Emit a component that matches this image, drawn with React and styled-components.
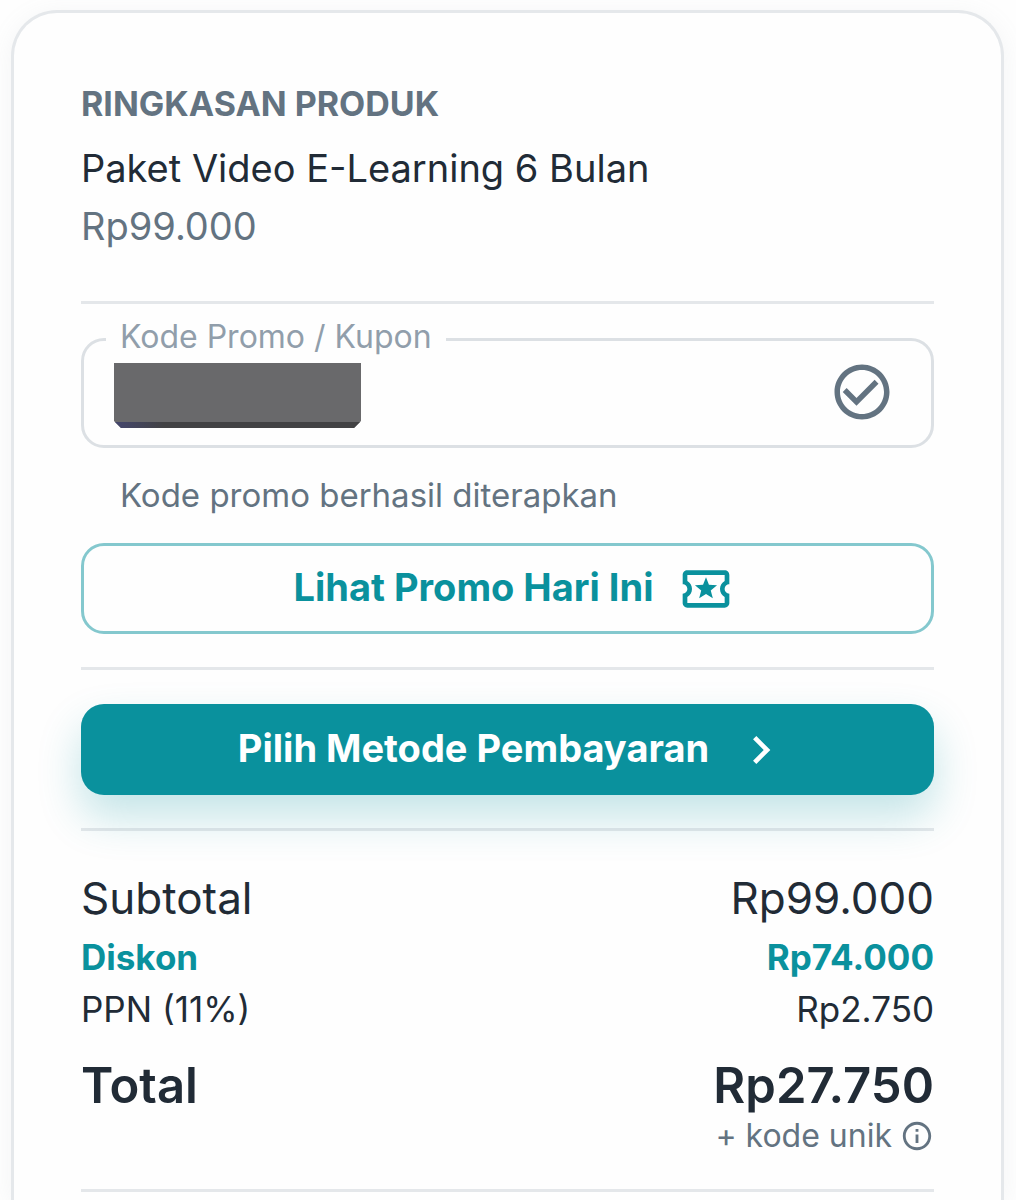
import React, { useState } from 'react';
import styled, { createGlobalStyle } from 'styled-components';
import {
    MdCheckCircleOutline,
    MdChevronRight,
    MdInfoOutline,
    MdOutlineLocalActivity,
} from 'react-icons/md';


function App() {

    const [code, setCode] = useState('');

    return (
        <>
            <GlobalStyle />
            <Page>
                <Card>
                    <Overline>Ringkasan Produk</Overline>
                    <ProductName>Paket Video E-Learning 6 Bulan</ProductName>
                    <ProductPrice>Rp99.000</ProductPrice>

                    <Divider />

                    <PromoField>
                        <PromoLegend>
                            <label htmlFor="promo">Kode Promo / Kupon</label>
                        </PromoLegend>
                        <PromoRow>
                            <PromoInput
                                id="promo"
                                type="text"
                                autoComplete="off"
                                aria-describedby="promo-status"
                                value={code}
                                onChange={(e) => setCode(e.target.value)}
                            />
                            <HiddenCode />
                            <MdCheckCircleOutline size={66} />
                        </PromoRow>
                    </PromoField>
                    <HelperText id="promo-status">Kode promo berhasil diterapkan</HelperText>

                    <OutlinedButton type="button">
                        <span>Lihat Promo Hari Ini</span>
                        <MdOutlineLocalActivity size={56} />
                    </OutlinedButton>

                    <Divider />

                    <PayButton type="button">
                        <span>Pilih Metode Pembayaran</span>
                        <MdChevronRight size={56} />
                    </PayButton>

                    <Divider />

                    <Summary>
                        <SubtotalRow>
                            <dt>Subtotal</dt>
                            <dd>Rp99.000</dd>
                        </SubtotalRow>
                        <DiscountRow>
                            <dt>Diskon</dt>
                            <dd>Rp74.000</dd>
                        </DiscountRow>
                        <TaxRow>
                            <dt>PPN (11%)</dt>
                            <dd>Rp2.750</dd>
                        </TaxRow>
                        <TotalRow>
                            <dt>Total</dt>
                            <dd>Rp27.750</dd>
                        </TotalRow>
                    </Summary>
                    <UniqueCode>
                        <span>+ kode unik</span>
                        <MdInfoOutline size={34} />
                    </UniqueCode>

                    <Divider />
                </Card>
            </Page>
        </>
    )
}

export default App


const GlobalStyle = createGlobalStyle`
    * {
        box-sizing: border-box;
    }

    body {
        margin: 0;
        background: #fefefe;
        color: #212b36;
        font-family: Inter, "Liberation Sans", sans-serif;
    }

    h1, h2, p, dl, dd {
        margin: 0;
    }
`

const Page = styled.main`
    display: flex;
    flex-direction: column;
    height: 100vh;
    padding: 10px 12px 0 11px;
    overflow: hidden;
`

const Card = styled.section`
    flex: 1;
    display: flex;
    flex-direction: column;
    padding: 68px 67px 0;
    border: 3px solid #e5e8eb;
    border-bottom: none;
    border-radius: 46px 46px 0 0;
    background: #fefefe;
    box-shadow: 0 4px 24px rgba(145, 158, 171, 0.1);
`

const Overline = styled.h2`
    color: #637381;
    font-size: 34px;
    font-weight: 700;
    line-height: 46px;
    text-transform: uppercase;
`

const ProductName = styled.h1`
    margin-top: 12px;
    font-size: 38px;
    font-weight: 400;
    line-height: 58px;
`

const ProductPrice = styled.p`
    margin-bottom: 46px;
    color: #637381;
    font-size: 38px;
    line-height: 58px;
`

const Divider = styled.hr`
    flex-shrink: 0;
    width: 100%;
    height: 3px;
    margin: 0;
    border: none;
    background: rgba(145, 158, 171, 0.24);
`

const PromoField = styled.fieldset`
    min-width: 0;
    margin: 17px 0 0;
    padding: 0 36px 18px 30px;
    border: 3px solid #dce0e4;
    border-radius: 23px;
`

const PromoLegend = styled.legend`
    margin-left: -8px;
    padding: 0 14px 4px;
    color: #919eab;
    font-size: 32px;
    line-height: 32px;
`

const PromoRow = styled.div`
    position: relative;
    display: flex;
    align-items: center;
    height: 70px;
    color: #637381;
`

const PromoInput = styled.input`
    flex: 1;
    min-width: 0;
    height: 64px;
    padding: 0;
    border: none;
    outline: none;
    background: transparent;
    color: #212b36;
    font: inherit;
    font-size: 38px;
`

/* covers the applied code */
const HiddenCode = styled.span`
    position: absolute;
    top: 6px;
    left: 0;
    width: 247px;
    height: 65px;
    background:
        linear-gradient(to right, #44466e, #424244 50px) bottom / 100% 6px no-repeat,
        #69696b;
    clip-path: polygon(0 0, 100% 0, 100% 58px, 240px 100%, 7px 100%, 0 58px);
`

const HelperText = styled.p`
    margin: 23px 39px 24px;
    color: #637381;
    font-size: 33px;
    line-height: 48px;
`

const Button = styled.button`
    display: flex;
    align-items: center;
    justify-content: center;
    gap: 24px;
    width: 100%;
    height: 91px;
    padding: 0;
    border-radius: 23px;
    font-family: inherit;
    font-size: 38px;
    font-weight: 700;
    line-height: 58px;
    cursor: pointer;

    span {
        padding-bottom: 4px;
    }

    svg {
        flex-shrink: 0;
        margin-right: -12px;
    }
`

const OutlinedButton = styled(Button)`
    margin-bottom: 33px;
    border: 3px solid #84c8ce;
    background: transparent;
    color: #0a919d;
`

const PayButton = styled(Button)`
    margin: 34px 0 33px;
    border: none;
    background: #0a919d;
    color: white;
    box-shadow: 0 22px 44px rgba(10, 145, 157, 0.24);
`

const Summary = styled.dl`
    margin-top: 34px;
`

const SummaryRow = styled.div`
    display: flex;
    justify-content: space-between;
`

const SubtotalRow = styled(SummaryRow)`
    font-size: 44px;
    line-height: 66px;
`

const DiscountRow = styled(SummaryRow)`
    color: #0a919d;
    font-size: 35px;
    font-weight: 700;
    line-height: 52px;
`

const TaxRow = styled(SummaryRow)`
    font-size: 35px;
    line-height: 52px;
`

const TotalRow = styled(SummaryRow)`
    padding-top: 18px;
    font-size: 49px;
    font-weight: 600;
    line-height: 66px;
`

const UniqueCode = styled.div`
    display: flex;
    align-items: center;
    justify-content: flex-end;
    gap: 8px;
    margin-bottom: 36px;
    color: #637381;
    font-size: 32px;
    line-height: 30px;
`
